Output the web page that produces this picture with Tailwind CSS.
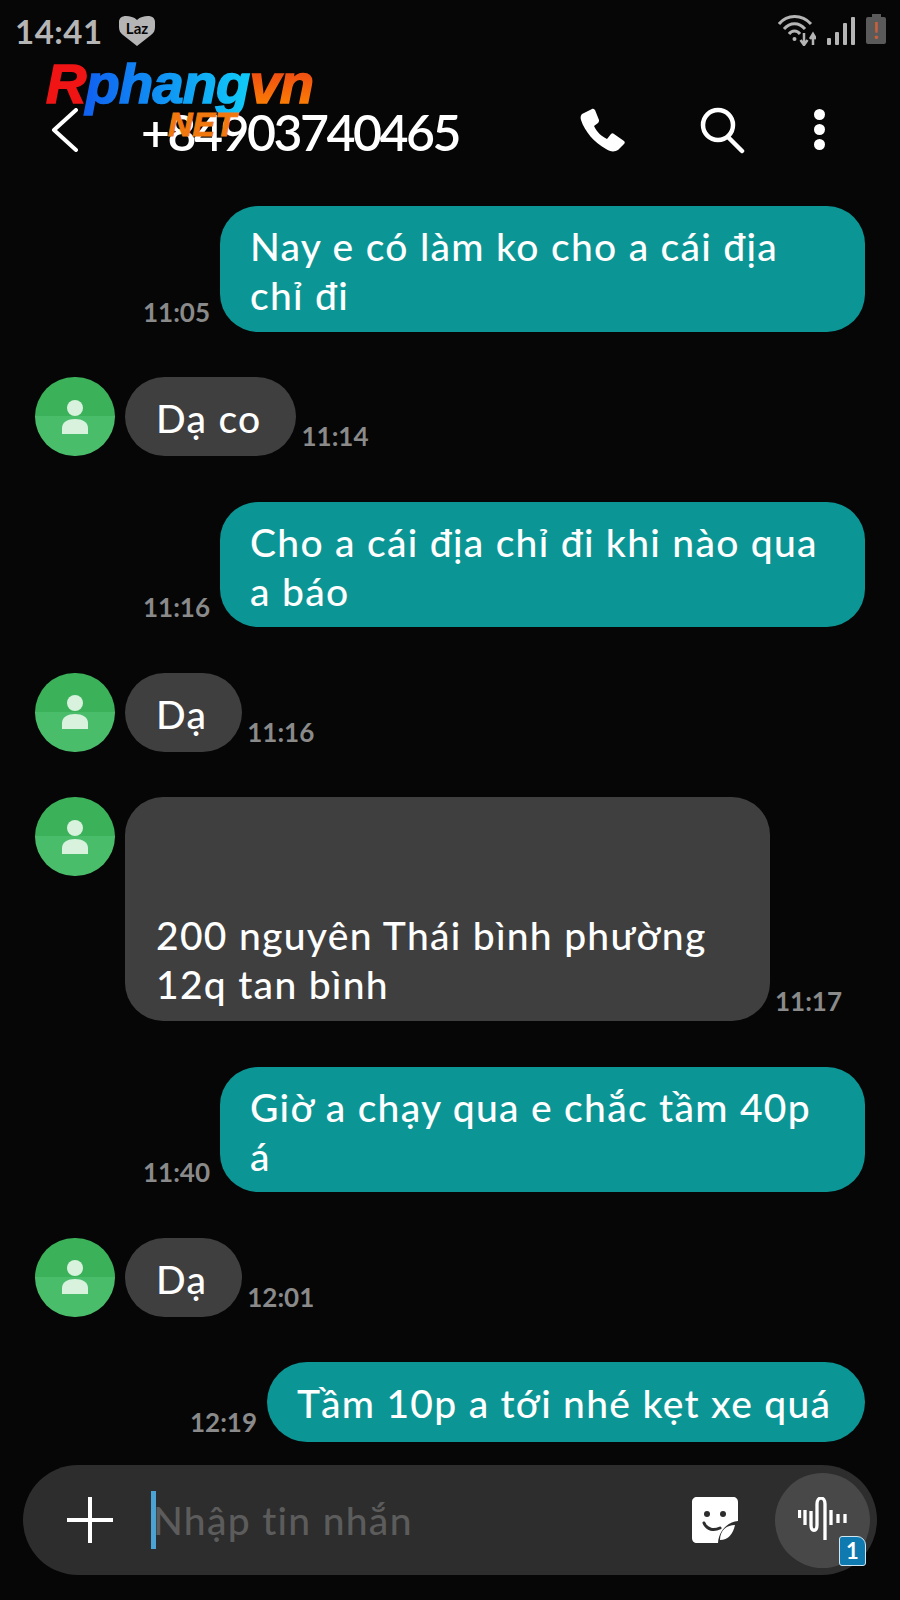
<!DOCTYPE html>
<html lang="en">
<head>
  <meta charset="UTF-8">
  <title>Tin nhắn</title>
  <script src="https://cdn.jsdelivr.net/npm/@tailwindcss/browser@4"></script>
</head>
<body class="bg-[#060606] text-white font-['Lato',sans-serif]">
  <div class="relative w-[900px] h-[1600px] overflow-hidden flex flex-col">

    <!-- status bar -->
    <div class="h-[56px] pl-[15px] pr-[14px] pt-[14px] flex items-start justify-between text-[#b5b5b5]">
      <div class="flex items-center gap-[16px]">
        <span class="text-[33px] leading-[34px] font-bold tracking-[0.5px]">14:41</span>
        <svg width="36" height="30" viewBox="0 0 36 30"><path d="M18 30 L4 19 C1 17 0 14 0 11 V6 C0 2 3 0 7 0 C11 0 15 1 18 4 C21 1 25 0 29 0 C33 0 36 2 36 6 V11 C36 14 35 17 32 19Z" fill="#b5b5b5"/><text x="18" y="18" text-anchor="middle" font-size="15" font-weight="700" fill="#060606" font-family="Lato">Laz</text></svg>
      </div>
      <div class="flex items-start gap-[11px]">
        <svg width="38" height="32" viewBox="0 0 38 32" fill="none" stroke="#b5b5b5" stroke-width="3"><path d="M1 10 C9 0 24 0 33 10"/><path d="M6 15 C12 8 21 8 27 15"/><path d="M11 20 C14 16 19 16 22 20"/><circle cx="16.500" cy="25" r="2" fill="#b5b5b5" stroke="none"/><path d="M26 19 V30 M22.500 26 L26 31 L29.500 26" stroke-width="2.500"/><path d="M35 31 V21 M32 25 L35 20 L38 25" stroke-width="2.500"/></svg>
        <div class="flex items-end gap-[4px] h-[30px] mt-[1px]">
          <div class="w-[4px] h-[7px] rounded-[1px] bg-[#b5b5b5]"></div>
          <div class="w-[4px] h-[13px] rounded-[1px] bg-[#b5b5b5]"></div>
          <div class="w-[4px] h-[22px] rounded-[1px] bg-[#b5b5b5]"></div>
          <div class="w-[4px] h-[28px] rounded-[1px] bg-[#b5b5b5]"></div>
        </div>
        <div class="flex flex-col items-center">
          <div class="w-[9px] h-[3px] bg-[#5a5a5a]"></div>
          <div class="w-[20px] h-[27px] bg-[#5a5a5a] rounded-[2px] flex items-center justify-center text-[#c8603c] text-[22px] leading-none font-bold">!</div>
        </div>
      </div>
    </div>

    <!-- header -->
    <div class="h-[150px] pt-[50px] flex items-start">
      <svg class="ml-[50px] mt-[2px]" width="30" height="44" viewBox="0 0 30 44" fill="none" stroke="#fff" stroke-width="4" stroke-linecap="round" stroke-linejoin="round"><path d="M26 2 L4 22 L26 42"/></svg>
      <span class="ml-[61px] text-[50px] leading-[52px] font-semibold tracking-[-2.5px]">+84903740465</span>
      <svg class="ml-[121px] mt-[2px]" width="46" height="45" viewBox="0 0 46 45"><path d="M2 6 L12 1 C13 0.500 14 1 15 2 L19 12 C19 13 19 14 18 15 L14 18 C17 24 21 28 27 31 L31 26 C32 25 33 25 34 26 L44 33 C45 34 45 35 44 36 L38 42 C35 44 30 44 26 41 C14 34 5 24 1 12 C0 9 1 7 2 6Z" fill="#fff"/></svg>
      <svg class="ml-[73px]" width="48" height="48" viewBox="0 0 48 48" fill="none" stroke="#fff" stroke-width="4.500" stroke-linecap="round"><circle cx="19" cy="19" r="15"/><path d="M29 31 L43 45"/></svg>
      <div class="ml-[67px] mt-[3px] flex flex-col gap-[4px]">
        <div class="w-[11px] h-[11px] rounded-full bg-white"></div>
        <div class="w-[11px] h-[11px] rounded-full bg-white"></div>
        <div class="w-[11px] h-[11px] rounded-full bg-white"></div>
      </div>
    </div>

    <!-- messages -->
    <div class="flex-1 flex flex-col gap-[45.5px] pl-[35px] pr-[35px] text-[39px] leading-[49px] font-medium tracking-[1.3px]">
      <div class="flex justify-end items-end gap-[10px]">
        <span class="mb-[6px] text-[26px] leading-[28px] tracking-normal font-bold text-[#8a8a8a]">11:05</span>
        <div class="w-[645px] rounded-[38px] bg-[#0b9695] pl-[30px] pr-[10px] pt-[16px] pb-[11.5px] whitespace-nowrap">Nay e có làm ko cho a cái địa<br>chỉ đi</div>
      </div>
      <div class="flex items-start gap-[10px]">
        <div class="w-[80px] h-[79px] rounded-full bg-[linear-gradient(#3bb15a_50%,#4abd6b_50%)] flex items-center justify-center">
          <svg width="30" height="34" viewBox="0 0 30 34" fill="#d8f2de"><circle cx="15" cy="8" r="8"/><path d="M2 34 V28 C2 22 8 19 15 19 C22 19 28 22 28 28 V34Z"/></svg>
        </div>
        <div class="flex items-end gap-[5px]">
          <div class="h-[79px] rounded-[40px] bg-[#3f3f3f] pl-[31px] pr-[35px] pt-[17px]">Dạ co</div>
          <span class="mb-[6px] text-[26px] leading-[28px] tracking-normal font-bold text-[#8a8a8a]">11:14</span>
        </div>
      </div>
      <div class="flex justify-end items-end gap-[10px]">
        <span class="mb-[6px] text-[26px] leading-[28px] tracking-normal font-bold text-[#8a8a8a]">11:16</span>
        <div class="w-[645px] rounded-[38px] bg-[#0b9695] pl-[30px] pr-[10px] pt-[16px] pb-[11.5px] whitespace-nowrap">Cho a cái địa chỉ đi khi nào qua<br>a báo</div>
      </div>
      <div class="flex items-start gap-[10px]">
        <div class="w-[80px] h-[79px] rounded-full bg-[linear-gradient(#3bb15a_50%,#4abd6b_50%)] flex items-center justify-center">
          <svg width="30" height="34" viewBox="0 0 30 34" fill="#d8f2de"><circle cx="15" cy="8" r="8"/><path d="M2 34 V28 C2 22 8 19 15 19 C22 19 28 22 28 28 V34Z"/></svg>
        </div>
        <div class="flex items-end gap-[5px]">
          <div class="h-[79px] rounded-[40px] bg-[#3f3f3f] pl-[31px] pr-[35px] pt-[17px]">Dạ</div>
          <span class="mb-[6px] text-[26px] leading-[28px] tracking-normal font-bold text-[#8a8a8a]">11:16</span>
        </div>
      </div>
      <div class="flex items-start gap-[10px]">
        <div class="w-[80px] h-[79px] rounded-full bg-[linear-gradient(#3bb15a_50%,#4abd6b_50%)] flex items-center justify-center">
          <svg width="30" height="34" viewBox="0 0 30 34" fill="#d8f2de"><circle cx="15" cy="8" r="8"/><path d="M2 34 V28 C2 22 8 19 15 19 C22 19 28 22 28 28 V34Z"/></svg>
        </div>
        <div class="flex items-end gap-[5px]">
          <div class="w-[645px] h-[224px] rounded-[38px] bg-[#3f3f3f] px-[31px] pt-[114px] whitespace-nowrap">200 nguyên Thái bình phường<br>12q tan bình</div>
          <span class="mb-[6px] text-[26px] leading-[28px] tracking-normal font-bold text-[#8a8a8a]">11:17</span>
        </div>
      </div>
      <div class="flex justify-end items-end gap-[10px]">
        <span class="mb-[6px] text-[26px] leading-[28px] tracking-normal font-bold text-[#8a8a8a]">11:40</span>
        <div class="w-[645px] rounded-[38px] bg-[#0b9695] pl-[30px] pr-[10px] pt-[16px] pb-[11.5px] whitespace-nowrap">Giờ a chạy qua e chắc tầm 40p<br>á</div>
      </div>
      <div class="flex items-start gap-[10px]">
        <div class="w-[80px] h-[79px] rounded-full bg-[linear-gradient(#3bb15a_50%,#4abd6b_50%)] flex items-center justify-center">
          <svg width="30" height="34" viewBox="0 0 30 34" fill="#d8f2de"><circle cx="15" cy="8" r="8"/><path d="M2 34 V28 C2 22 8 19 15 19 C22 19 28 22 28 28 V34Z"/></svg>
        </div>
        <div class="flex items-end gap-[5px]">
          <div class="h-[79px] rounded-[40px] bg-[#3f3f3f] pl-[31px] pr-[35px] pt-[17px]">Dạ</div>
          <span class="mb-[6px] text-[26px] leading-[28px] tracking-normal font-bold text-[#8a8a8a]">12:01</span>
        </div>
      </div>
      <div class="flex justify-end items-end gap-[10px]">
        <span class="mb-[6px] text-[26px] leading-[28px] tracking-normal font-bold text-[#8a8a8a]">12:19</span>
        <div class="w-[598px] h-[79.5px] rounded-[40px] bg-[#0b9695] pl-[30px] pt-[17px] whitespace-nowrap">Tầm 10p a tới nhé kẹt xe quá</div>
      </div>
    </div>

    <!-- input -->
    <div class="mx-[23px] mb-[25px] h-[110px] rounded-[55px] bg-[#2d2d2d] flex items-center pl-[44px] pr-[7px]">
      <svg width="46" height="46" viewBox="0 0 46 46" fill="#fff"><rect x="21" y="0" width="4" height="46"/><rect x="0" y="21" width="46" height="4"/></svg>
      <div class="ml-[38px] w-[5px] h-[58px] bg-[#4aa3d4]"></div>
      <span class="ml-[-3px] text-[39px] leading-[49px] tracking-[1.3px] text-[#5c5c5c] font-medium">Nhập tin nhắn</span>
      <svg class="ml-auto" width="46" height="46" viewBox="0 0 46 46"><path d="M5 0 H41 C44 0 46 2 46 5 V24 C36 25 27 33 26 46 H5 C2 46 0 44 0 41 V5 C0 2 2 0 5 0Z" fill="#fff"/><circle cx="15" cy="17" r="3" fill="#2d2d2d"/><circle cx="31" cy="17" r="3" fill="#2d2d2d"/><path d="M12 26 C15 33 22 34 28 31" stroke="#2d2d2d" stroke-width="3" fill="none" stroke-linecap="round"/><path d="M43 28 C35 28 28 33 28 43 C36 43 41 37 43 28Z" fill="#fff"/></svg>
      <div class="relative ml-[37px] w-[95px] h-[95px] rounded-full bg-[#484848] flex items-center justify-center">
        <svg width="50" height="46" viewBox="0 0 50 46" fill="none" stroke="#fff" stroke-width="3.300"><path d="M1.500 13 V21"/><path d="M7 13 V28"/><path d="M13 14 V28 C13 35 19 35 19 28 V7 C19 -1 27 -1 27 7 V43"/><path d="M33 13 V28"/><path d="M40 17 V26"/><path d="M47 17 V26"/></svg>
        <div class="absolute right-[4px] bottom-[2px] w-[27px] h-[30px] rounded-[3px] rounded-tr-[9px] bg-[#0f7ab0] border border-[#cfe6f2] flex items-center justify-center text-[22px] leading-none font-bold">1</div>
      </div>
    </div>

    <!-- watermark over the header -->
    <svg class="absolute left-[44px] top-[55px]" width="285" height="76" viewBox="0 0 285 76" font-family="Liberation Sans" font-weight="700" font-style="italic" font-size="56" stroke-width="1.600">
      <defs>
        <linearGradient id="wmR" x1="0" y1="0" x2="1" y2="0"><stop offset="0.600" stop-color="#f01414"/><stop offset="1" stop-color="#9a3aa0"/></linearGradient>
        <linearGradient id="wmB" gradientUnits="userSpaceOnUse" x1="40" y1="0" x2="200" y2="0"><stop offset="0" stop-color="#1060f0"/><stop offset="1" stop-color="#10c8f8"/></linearGradient>
        <linearGradient id="wmO" x1="0" y1="0" x2="0" y2="1"><stop offset="0" stop-color="#e8301a"/><stop offset="1" stop-color="#ff8c00"/></linearGradient>
      </defs>
      <text x="2" y="48" textLength="268" lengthAdjust="spacing"><tspan fill="url(#wmR)" stroke="url(#wmR)">R</tspan><tspan fill="url(#wmB)" stroke="url(#wmB)">phang</tspan><tspan fill="url(#wmO)" stroke="url(#wmO)">vn</tspan></text>
    </svg>
    <div class="absolute left-[168px] top-[107px] text-[34px] leading-[34px] font-['Liberation_Sans',sans-serif] font-bold italic text-[#f0780f] [-webkit-text-stroke:1px_#f0780f]">NET</div>
  </div>
</body>
</html>
